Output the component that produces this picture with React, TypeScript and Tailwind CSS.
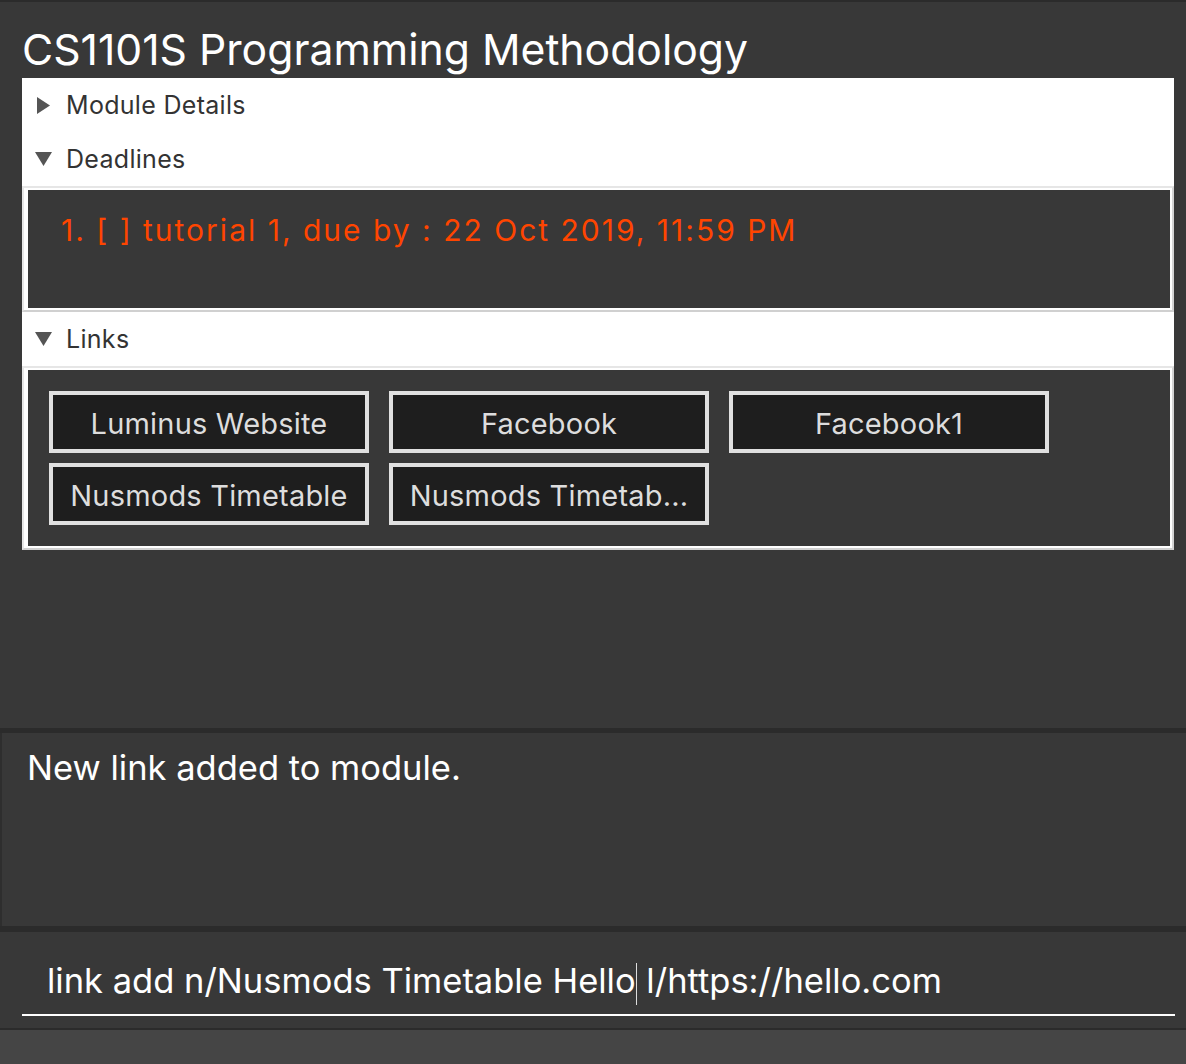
const links = [
  "Luminus Website",
  "Facebook",
  "Facebook1",
  "Nusmods Timetable",
  "Nusmods Timetab...",
];

function Arrow({ open }: { open: boolean }) {
  return open ? (
    <svg width="17" height="14" viewBox="0 0 17 14" className="shrink-0">
      <path d="M0 0 H17 L8.5 14 Z" fill="#555555" />
    </svg>
  ) : (
    <svg width="13" height="17" viewBox="0 0 13 17" className="shrink-0">
      <path d="M0 0 L13 8.5 L0 17 Z" fill="#555555" />
    </svg>
  );
}

function Header({ title, open }: { title: string; open: boolean }) {
  return (
    <div className="h-[54px] flex items-center bg-white pl-[12px]">
      <div className="w-[18px] flex justify-center">
        <Arrow open={open} />
      </div>
      <span className="ml-[14px] pt-[2px] text-[25px] tracking-[0.3px] text-[#333333]">{title}</span>
    </div>
  );
}

function Box({ children, className }: { children: React.ReactNode; className: string }) {
  return (
    <div className="border-2 border-t-[#e6e6e6] border-l-[#e6e6e6] border-r-[#d4d4d4] border-b-[#d0d0d0]">
      <div className={"border-white border-t-2 border-l-4 border-r-2 border-b-2 bg-[#383838] " + className}>
        {children}
      </div>
    </div>
  );
}

export default function App() {
  return (
    <div
      className="w-[1186px] h-[1064px] bg-[#383838] flex flex-col overflow-hidden"
      style={{ fontFamily: 'Inter, "Open Sans", sans-serif' }}
    >
      <div className="h-[2px] bg-[#2b2b2b]" />

      <main className="h-[726px] pl-[22px] pr-[12px]">
        <h1 className="pt-[19px] leading-[57px] text-[42.7px] text-white whitespace-nowrap">
          CS1101S Programming Methodology
        </h1>
        <div className="bg-white">
          <Header title="Module Details" open={false} />
          <Header title="Deadlines" open={true} />
          <Box className="h-[122px] pl-[33px] pt-[18px]">
            <p className="text-[30px] tracking-[2px] text-[#ff4500] whitespace-nowrap">
              1. [ ] tutorial 1, due by : 22 Oct 2019, 11:59 PM
            </p>
          </Box>
          <Header title="Links" open={true} />
          <Box className="h-[180px] px-[21px] pt-[21px]">
            <div className="grid grid-cols-[320px_320px_320px] gap-x-[20px] gap-y-[10px]">
              {links.map((l) => (
                <div
                  key={l}
                  className="h-[62px] border-4 border-[#e0e0e0] bg-[#1e1e1e] flex items-center justify-center pt-[3px] text-[29px] tracking-[0.2px] text-[#dddddd] whitespace-nowrap"
                >
                  {l}
                </div>
              ))}
            </div>
          </Box>
        </div>
      </main>

      <div className="h-[5px] bg-[#2b2b2b]" />

      <div className="h-[193px] border-l-2 border-[#2e2e2e] pl-[25px] pt-[9px]">
        <p className="text-[34.5px] text-white">New link added to module.</p>
      </div>

      <div className="h-[6px] bg-[#2b2b2b]" />

      <div className="h-[96px] pl-[22px] pr-[11px] pb-[12px] flex flex-col justify-end">
        <div className="border-b-2 border-white pl-[25px] pb-[7px] text-[34.5px] text-white whitespace-nowrap">
          link add n/Nusmods Timetable Hello
          <span className="inline-block w-[1px] h-[42px] bg-[#dddddd] align-middle" />
          {" "}l/https://hello.com
        </div>
      </div>

      <div className="h-[2px] bg-[#2b2b2b]" />
      <div className="flex-1 bg-[#454545]" />
    </div>
  );
}
